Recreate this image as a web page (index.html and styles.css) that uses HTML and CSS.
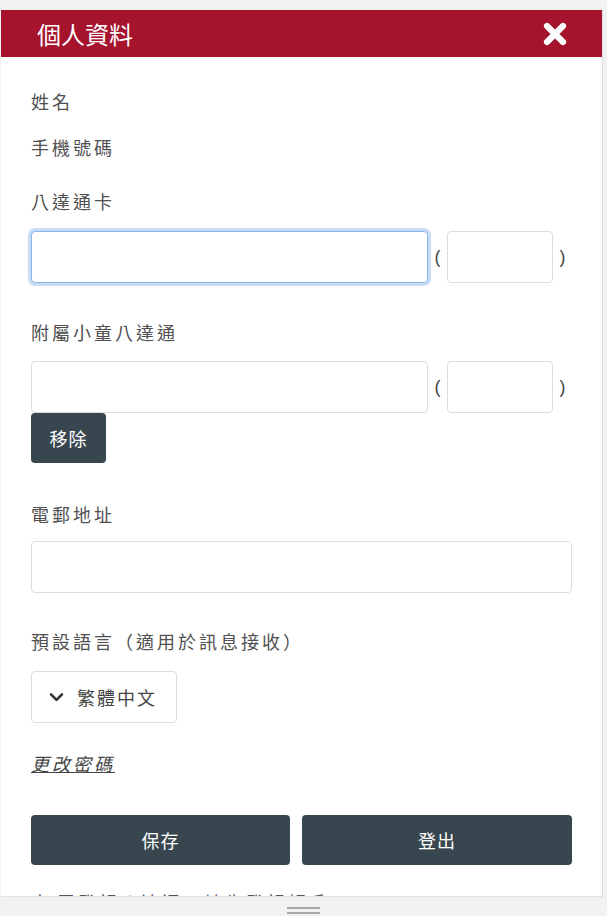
FILE: index.html
```html
<!DOCTYPE html>
<html lang="zh-Hant">
<head>
<meta charset="utf-8">
<title>個人資料</title>
<link rel="stylesheet" href="styles.css">
</head>
<body>
<div class="panel">
  <div class="header">
    <div class="title">個人資料</div>
    <svg class="close" viewBox="0 0 24 24" width="24" height="24" aria-hidden="true">
      <path d="M4 4 L20 20 M20 4 L4 20" stroke="#fff" stroke-width="6.2" stroke-linecap="round"/>
    </svg>
  </div>
  <div class="body">
    <div class="label l-name">姓名</div>
    <div class="label l-phone">手機號碼</div>
    <div class="label l-card">八達通卡</div>
    <div class="card-row r-card">
      <div class="input main focus"></div>
      <span class="paren">(</span>
      <div class="input small"></div>
      <span class="paren">)</span>
    </div>
    <div class="label l-child">附屬小童八達通</div>
    <div class="card-row r-child">
      <div class="input main"></div>
      <span class="paren">(</span>
      <div class="input small"></div>
      <span class="paren">)</span>
    </div>
    <button class="btn remove">移除</button>
    <div class="label l-email">電郵地址</div>
    <div class="input full"></div>
    <div class="label l-lang">預設語言（適用於訊息接收）</div>
    <div class="select">
      <svg class="chev" viewBox="0 0 16 12" width="15" height="11" aria-hidden="true">
        <path d="M2 2.5 L8 8.5 L14 2.5" fill="none" stroke="#333" stroke-width="2.8" stroke-linecap="round" stroke-linejoin="round"/>
      </svg>
      <span>繁體中文</span>
    </div>
    <a class="link" href="#">更改密碼</a>
    <div class="actions">
      <button class="btn save">保存</button>
      <button class="btn logout">登出</button>
    </div>
    <div class="note">如需登記八達通，請先登記帳戶</div>
  </div>
</div>
<div class="handle"><span></span><span></span></div>
</body>
</html>
```
FILE: styles.css
```css
html, body {
  margin: 0;
  padding: 0;
}
body {
  background: #f2f2f2;
  font-family: "Noto Sans CJK TC", "Noto Sans", sans-serif;
  width: 607px;
  height: 916px;
  overflow: hidden;
}
.panel {
  margin: 10px 0 0 1px;
  width: 601px;
  height: 886px;
  background: #fff;
  border-right: 1px solid #dcdcdc;
  border-bottom: 1px solid #e2e2e2;
  overflow: hidden;
}
.header {
  height: 47px;
  background: #a5132d;
  display: flex;
  align-items: center;
  justify-content: space-between;
  padding: 0 35px 0 36px;
}
.title {
  color: #fff;
  font-size: 24px;
  line-height: 47px;
}
.close {
  display: block;
}
.body {
  padding: 32px 30px 0 30px;
}
.label {
  color: #505050;
  font-size: 18px;
  line-height: 24px;
  letter-spacing: 3px;
}
.l-phone { margin-top: 22px; }
.l-card { margin-top: 30px; }
.r-card { margin-top: 18px; }
.l-child { margin-top: 37px; }
.r-child { margin-top: 17px; }
.l-email { margin-top: 39px; }
.l-lang { margin-top: 36px; }
.card-row {
  display: flex;
  align-items: center;
  height: 52px;
}
.input {
  box-sizing: border-box;
  height: 52px;
  border: 1px solid #dcdcdc;
  border-radius: 4px;
  background: #fff;
}
.input.main { flex: 1; }
.input.small { width: 106px; }
.input.focus {
  border-color: #86b7e8;
  box-shadow: 0 0 0 3px #c9def5;
}
.paren {
  width: 19px;
  text-align: center;
  color: #444;
  font-family: "Liberation Sans", sans-serif;
  font-size: 18px;
}
.btn {
  border: none;
  background: #384650;
  color: #fff;
  font-family: "Noto Sans CJK TC", "Noto Sans", sans-serif;
  font-size: 18px;
  border-radius: 4px;
  letter-spacing: 1px;
}
.remove {
  display: block;
  width: 75px;
  height: 50px;
  padding: 0;
}
.input.full {
  margin-top: 15px;
}
.select {
  margin-top: 18px;
  box-sizing: border-box;
  width: 146px;
  height: 52px;
  border: 1px solid #dcdcdc;
  border-radius: 4px;
  display: flex;
  align-items: center;
  padding-left: 17px;
  gap: 13px;
  color: #444;
  font-size: 18px;
  letter-spacing: 2px;
}
.chev { display: block; }
.link {
  display: block;
  margin-top: 28px;
  width: max-content;
  color: #444;
  font-style: italic;
  font-size: 18px;
  line-height: 24px;
  letter-spacing: 3px;
  text-decoration: underline;
}
.actions {
  margin-top: 40px;
  display: flex;
  gap: 12px;
}
.save { width: 259px; height: 50px; }
.logout { flex: 1; height: 50px; }
.note {
  margin-top: 25px;
  padding-left: 5px;
  color: #555;
  font-size: 18px;
  line-height: 24px;
  letter-spacing: 3px;
}
.handle {
  display: flex;
  flex-direction: column;
  align-items: center;
  gap: 3px;
  padding-top: 10px;
}
.handle span {
  display: block;
  width: 33px;
  height: 2px;
  background: #a9a9a9;
}
```
